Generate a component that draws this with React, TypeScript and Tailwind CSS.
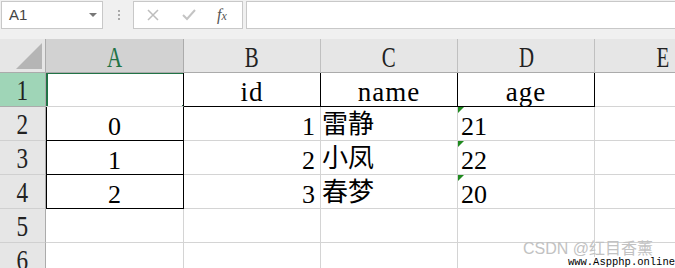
const serif = "font-[family-name:'Liberation_Serif','Noto_Sans_CJK_SC',serif]";

type Row = {
  n: string;
  a: string;
  b: string;
  c: string;
  d: string;
  flag?: boolean;
};

const rows: Row[] = [
  { n: "1", a: "", b: "id", c: "name", d: "age" },
  { n: "2", a: "0", b: "1", c: "雷静", d: "21", flag: true },
  { n: "3", a: "1", b: "2", c: "小凤", d: "22", flag: true },
  { n: "4", a: "2", b: "3", c: "春梦", d: "20", flag: true },
  { n: "5", a: "", b: "", c: "", d: "" },
  { n: "6", a: "", b: "", c: "", d: "" },
];

function FormulaBar() {
  return (
    <div className="flex h-[39px] items-start bg-[#f0f0f0] pt-[1px] pl-[1px]">
      {/* Name box */}
      <div className="relative flex h-[28px] w-[102px] items-center border border-[#c8c8c8] bg-white pl-[7px] font-[family-name:'Liberation_Sans',sans-serif] text-[15px] text-[#444]">
        A1
        <span className="absolute right-[5px] top-[11px] h-0 w-0 border-x-[4px] border-t-[4px] border-x-transparent border-t-[#777]" />
      </div>
      {/* grip */}
      <div className="ml-[15px] mt-[9px] flex flex-col gap-[2px]">
        <span className="h-[2px] w-[2px] bg-[#aaa]" />
        <span className="h-[2px] w-[2px] bg-[#aaa]" />
        <span className="h-[2px] w-[2px] bg-[#aaa]" />
      </div>
      {/* cancel / enter / fx */}
      <div className="ml-[13px] flex h-[28px] w-[110px] items-center border border-[#c8c8c8] bg-white">
        <svg width="14" height="14" viewBox="0 0 14 14" className="ml-[12px]">
          <path d="M2 2 L12 12 M12 2 L2 12" stroke="#bdbdbd" strokeWidth="1.5" fill="none" />
        </svg>
        <svg width="16" height="14" viewBox="0 0 16 14" className="ml-[21px]">
          <path d="M2 7 L6 11 L14 2" stroke="#c4c4c4" strokeWidth="2" fill="none" />
        </svg>
        <span className="ml-[20px] font-[family-name:'Liberation_Serif',serif] text-[16px] italic text-[#555]">
          f<span className="text-[12px]">x</span>
        </span>
      </div>
      {/* formula input */}
      <div className="ml-[3px] h-[28px] flex-1 border border-r-0 border-[#c8c8c8] bg-white" />
    </div>
  );
}

function Sheet() {
  const head = `${serif} flex items-end justify-center overflow-hidden leading-none text-[29px] text-[#222]`;
  const cell = `${serif} relative flex items-end overflow-hidden whitespace-nowrap leading-none text-[26px] text-black border-r border-b border-[#d4d4d4]`;

  return (
    <div className="grid grid-cols-[46px_138px_137px_137px_137px_137px] grid-rows-[34px_34px_34px_34px_34px_34px_34px]">
      {/* corner */}
      <div className="flex items-end justify-end border-r border-b border-[#ababab] bg-[#e6e6e6] pr-[2px] pb-[2px]">
        <svg width="28" height="28" viewBox="0 0 28 28">
          <path d="M27 1 L27 27 L1 27 Z" fill="#b5b5b5" />
        </svg>
      </div>
      <div className={`${head} border-r border-b border-[#ababab] bg-[#d2d2d2] text-[#217346]`}>
        <span className="scale-x-[0.72]">A</span>
      </div>
      {["B", "C", "D", "E"].map((l) => (
        <div key={l} className={`${head} border-r border-b border-r-[#c0c0c0] border-b-[#ababab] bg-[#e6e6e6]`}>
          <span className="scale-x-[0.72]">{l}</span>
        </div>
      ))}

      {rows.map((r, i) => {
        const first = i === 0;
        const boxed = i >= 1 && i <= 3;
        return (
          <div key={r.n} className="contents">
            <div
              className={
                first
                  ? `${head} border-r border-b border-[#ababab] bg-[#9fd5b7] text-[#1d6b40] pb-[1px]`
                  : `${head} border-r border-b border-r-[#ababab] border-b-[#d0d0d0] bg-[#e6e6e6] pb-[1px]`
              }
            >
              <span className="scale-x-[0.8]">{r.n}</span>
            </div>

            {/* A */}
            <div
              className={
                boxed
                  ? `${cell} justify-center border-r-black border-b-black shadow-[inset_1px_0_0_#000]`
                  : first
                    ? `${cell} justify-center border-r-black`
                    : `${cell} justify-center`
              }
            >
              {r.a}
              {first && (
                <>
                  <div className="absolute -top-[1px] left-0 -right-[2px] -bottom-[2px] z-10 border-2 border-[#217346]" />
                  <div className="absolute -right-[4px] -bottom-[4px] z-20 h-[6px] w-[6px] border border-white bg-[#217346]" />
                </>
              )}
            </div>

            {/* B */}
            <div
              className={
                first
                  ? `${cell} justify-center border-r-black border-b-black text-[27px] tracking-[1px]`
                  : `${cell} justify-end pr-[5px]`
              }
            >
              {r.b}
            </div>

            {/* C */}
            <div
              className={
                first
                  ? `${cell} justify-center border-r-black border-b-black text-[27px] tracking-[1px]`
                  : `${cell} justify-start pl-[1px] pb-[2px] text-[25px] text-[#1a1a1a]`
              }
            >
              {r.c}
            </div>

            {/* D */}
            <div
              className={
                first
                  ? `${cell} justify-center border-r-black border-b-black text-[27px] tracking-[1px]`
                  : `${cell} justify-start pl-[3px]`
              }
            >
              {r.flag && (
                <span className="absolute left-0 top-0 h-0 w-0 border-t-[6px] border-r-[6px] border-t-[#1f8a1f] border-r-transparent" />
              )}
              {r.d}
            </div>

            {/* E */}
            <div className={cell} />
          </div>
        );
      })}
    </div>
  );
}

export default function App() {
  return (
    <div className="relative h-[268px] w-[675px] overflow-hidden bg-white">
      <FormulaBar />
      <Sheet />

      {/* watermark */}
      <div className="absolute left-[523px] top-[241px] z-30 font-[family-name:'Liberation_Sans','Noto_Sans_CJK_SC',sans-serif] text-[16px] leading-none text-[#c2c2c2]">
        CSDN @红目香薰
      </div>
      <div className="absolute right-0 top-[257px] z-30 bg-white pl-[2px] font-[family-name:'Liberation_Mono',monospace] text-[10.5px] leading-[11px] text-black">
        www.Aspphp.online
      </div>
    </div>
  );
}
